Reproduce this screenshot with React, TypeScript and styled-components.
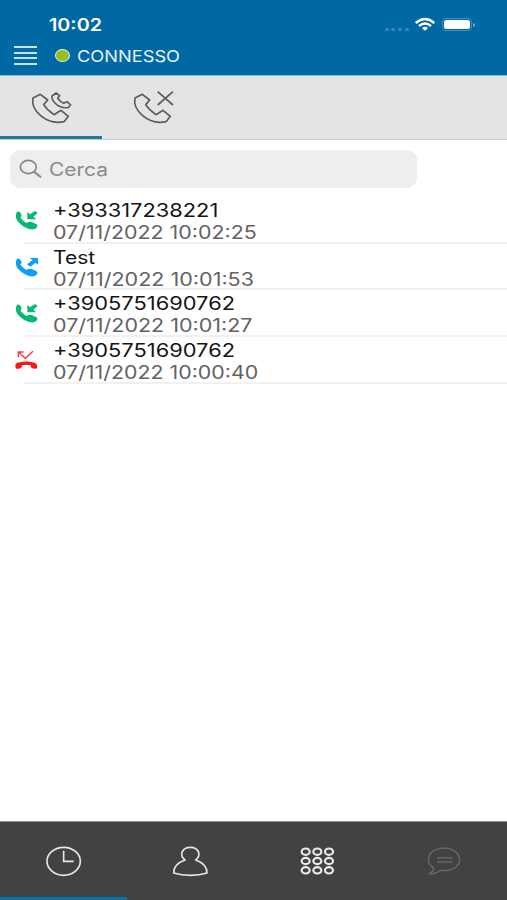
import React from "react";
import styled, { createGlobalStyle } from "styled-components";

const Global = createGlobalStyle`
  * { box-sizing: border-box; }
  body { margin: 0; background: #fff; font-family: Inter, "Liberation Sans", sans-serif; }
  svg { display: block; flex: none; overflow: visible; }
`;

const Screen = styled.div`
  width: 507px;
  height: 900px;
  display: flex;
  flex-direction: column;
  background: #fff;
  overflow: hidden;
`;

const Header = styled.header`
  flex: none;
  height: 76px;
  background: #0068a3;
  border-bottom: 1px solid #80bade;
  color: #fff;
`;

const StatusBar = styled.div`
  height: 40px;
  padding: 10px 32px 0 49px;
  display: flex;
  justify-content: space-between;
`;

const Connection = styled.div`
  height: 31px;
  padding-left: 14px;
  display: flex;
  align-items: center;
`;

const Label = styled.span<{ $size: number; $scale: number; $color: string; $weight?: number; $line?: number }>`
  display: block;
  width: max-content;
  white-space: nowrap;
  font-size: ${(p) => p.$size}px;
  font-weight: ${(p) => p.$weight ?? 400};
  line-height: ${(p) => p.$line ?? 22}px;
  color: ${(p) => p.$color};
  transform: scaleX(${(p) => p.$scale});
  transform-origin: left center;
`;

const Burger = styled.div`
  width: 23px;
  height: 19px;
  display: flex;
  flex-direction: column;
  justify-content: space-between;
  margin-right: 17.5px;
  span { height: 2px; background: #c9e2f1; }
`;

const Dot = styled.div`
  width: 15px;
  height: 13px;
  border-radius: 50%;
  background: #93bf1f;
  border: 1.5px solid #e4f2e4;
  margin-right: 7px;
`;

const Tabs = styled.nav`
  flex: none;
  height: 64px;
  display: flex;
  background: #e4e4e4;
  border-bottom: 1px solid #cbcbcb;
`;

const Tab = styled.div<{ $active?: boolean }>`
  width: 102px;
  height: 63px;
  padding: 14px 0 0 1px;
  display: flex;
  justify-content: center;
  border-bottom: 3px solid ${(p) => (p.$active ? "#1f78a8" : "transparent")};
`;

const Search = styled.div`
  flex: none;
  width: 407px;
  height: 38px;
  margin: 10px 0 9px 10px;
  padding-left: 9px;
  display: flex;
  align-items: center;
  gap: 6.5px;
  border-radius: 11px / 9px;
  background: #eee;
`;

const SearchText = styled.div`
  padding-top: 1px;
`;

const List = styled.main`
  flex: 1;
`;

const Row = styled.div`
  height: 46.7px;
  display: flex;
  padding-left: 15px;
`;

const RowIcon = styled.div`
  width: 9px;
  padding-top: 14px;
`;

const RowText = styled.div`
  flex: 1;
  padding: 3px 0 0 29px;
  border-bottom: 2px solid #f1f1f1;
`;

const BottomBar = styled.footer`
  flex: none;
  height: 79px;
  display: grid;
  grid-template-columns: repeat(4, 1fr);
  background: #424242;
  border-top: 1px solid #8d8d8d;
`;

const BottomItem = styled.div<{ $active?: boolean }>`
  display: flex;
  justify-content: center;
  padding: 23px 0 0 1px;
  border-bottom: 3px solid ${(p) => (p.$active ? "#0870aa" : "transparent")};
`;

const handset =
  "M98 66 L120 55 L142 72 L130 86 Q141 103 161 116 L182 103 L204 121 L191 137 Q151 145 121 119 Q92 94 98 66 Z";

const RecentTabIcon = () => (
  <svg width="40" height="34" viewBox="95 42 120 102" fill="none" stroke="#5b5b5b" strokeWidth="5" strokeLinejoin="round">
    <path d={handset} />
    <path d="M155 60 L167 51 L178 59 L172 67 Q179 77 190 82 L200 77 L211 87 L203 95 Q178 97 164 81 Q153 70 155 60 Z" />
  </svg>
);

const MissedTabIcon = () => (
  <svg width="40" height="34" viewBox="95 42 120 102" fill="none" stroke="#5b5b5b" strokeWidth="5" strokeLinejoin="round">
    <path d={handset} />
    <path d="M166 47 L212 87 M212 47 L166 87" />
  </svg>
);

const filledHandset =
  "M6 3 Q13 -1 18 8 Q22 15 16 19 Q21 29 34 36 Q42 31 50 33 L65 40 Q70 44 65 50 Q57 58 42 54 Q19 47 6 28 Q-1 13 6 3 Z";

type Kind = "incoming" | "outgoing" | "missed";

const CallIcon = ({ kind }: { kind: Kind }) => {
  if (kind === "missed")
    return (
      <svg width="23" height="19" viewBox="0 0 69 57" fill="none">
        <path d="M10 19 V3 H26 M10 3 L31 22 L54 1" stroke="#f23c3c" strokeWidth="4" />
        <path d="M2 51 Q-3 35 15 34 Q34 29 52 34 Q69 36 66 51 Q65 53 61 53 L51 52 Q47 51 47 43 Q34 40 21 43 Q21 51 17 52 L6 54 Z" fill="#fa1515" />
      </svg>
    );
  return (
    <svg width="23" height="19" viewBox="0 0 69 57" fill={kind === "incoming" ? "#08b872" : "#0aa0f5"}>
      <path d={filledHandset} />
      {kind === "incoming" ? (
        <path d="M37 3 L45 10 L60 0 L68 6 L55 17 L64 25 H37 Z" />
      ) : (
        <path d="M44 0 H69 V20 L62 14 L46 26 L36 19 L53 7 Z" />
      )}
    </svg>
  );
};

const WifiIcon = () => (
  <svg width="20" height="13" viewBox="0 0 60 39" fill="none" stroke="#fff" strokeWidth="7">
    <path d="M2 15 Q30 -9 58 15 M12 24 Q30 9 48 24" />
    <path d="M21 30 Q30 23 39 30 L30 38 Z" fill="#fff" stroke="none" />
  </svg>
);

const StatusIcons = styled.div`
  display: flex;
  align-items: center;
  height: 29px;
`;

const Signal = styled.div`
  display: flex;
  gap: 2.6px;
  padding-top: 9px;
  margin-right: 6.5px;
  span { width: 4px; height: 3px; border-radius: 50%; background: #3e8bbb; }
`;

const Battery = styled.div`
  width: 30px;
  height: 13px;
  margin: 0 2px 0 7px;
  padding: 1px;
  border: 1px solid #3f8fc1;
  border-radius: 4px;
  &::before { content: ""; display: block; height: 100%; border-radius: 2.5px; background: #fff; }
`;

const BatteryCap = styled.div`
  width: 2px;
  height: 4px;
  margin-left: -1px;
  border-radius: 0 2px 2px 0;
  background: #5ba1cb;
`;

const calls: { kind: Kind; name: string; nameScale: number; date: string; dateScale: number }[] = [
  { kind: "incoming", name: "+393317238221", nameScale: 1.213, date: "07/11/2022 10:02:25", dateScale: 1.188 },
  { kind: "outgoing", name: "Test", nameScale: 1.17, date: "07/11/2022 10:01:53", dateScale: 1.197 },
  { kind: "incoming", name: "+3905751690762", nameScale: 1.214, date: "07/11/2022 10:01:27", dateScale: 1.194 },
  { kind: "missed", name: "+3905751690762", nameScale: 1.214, date: "07/11/2022 10:00:40", dateScale: 1.187 },
];

export default function App() {
  return (
    <>
      <Global />
      <Screen>
        <Header>
          <StatusBar>
            <Label $size={17} $scale={1.16} $weight={600} $line={30} $color="#fff">10:02</Label>
            <StatusIcons>
              <Signal><span /><span /><span /><span /></Signal>
              <WifiIcon />
              <Battery />
              <BatteryCap />
            </StatusIcons>
          </StatusBar>
          <Connection>
            <Burger><span /><span /><span /><span /></Burger>
            <Dot />
            <Label $size={16} $scale={1.14} $color="#e6f3fb">CONNESSO</Label>
          </Connection>
        </Header>
        <Tabs>
          <Tab $active><RecentTabIcon /></Tab>
          <Tab><MissedTabIcon /></Tab>
        </Tabs>
        <Search>
          <svg width="23" height="20" viewBox="0 0 69 60" fill="none" stroke="#858585" strokeWidth="5">
            <ellipse cx="28" cy="24" rx="24" ry="20" />
            <path d="M45 38 L66 55" strokeWidth="6" />
          </svg>
          <SearchText>
            <Label $size={18} $scale={1.165} $color="#8b8b8b">Cerca</Label>
          </SearchText>
        </Search>
        <List>
          {calls.map((c) => (
            <Row key={c.date}>
              <RowIcon><CallIcon kind={c.kind} /></RowIcon>
              <RowText>
                <Label $size={18} $scale={c.nameScale} $color="#151515">{c.name}</Label>
                <Label $size={18} $scale={c.dateScale} $color="#636363">{c.date}</Label>
              </RowText>
            </Row>
          ))}
        </List>
        <BottomBar>
          <BottomItem $active>
            <svg width="37" height="32" viewBox="0 0 111 96" fill="none" stroke="#e6e6e6" strokeWidth="5">
              <ellipse cx="56" cy="49" rx="50" ry="42" />
              <path d="M56 17 V49 H86" />
            </svg>
          </BottomItem>
          <BottomItem>
            <svg width="37" height="32" viewBox="0 0 111 96" fill="none" stroke="#e6e6e6" strokeWidth="5" strokeLinejoin="round">
              <path d="M39 45 Q26 35 30 22 Q36 7 55 7 Q74 7 80 22 Q84 35 71 45 Q105 57 105 84 Q82 91 55 91 Q28 91 5 84 Q5 57 39 45 Z" />
            </svg>
          </BottomItem>
          <BottomItem>
            <svg width="37" height="32" viewBox="0 0 111 96" fill="none" stroke="#eaeaea" strokeWidth="6.5">
              {[20, 48, 76].map((y) => [20, 55, 90].map((x) => <ellipse key={`${x}-${y}`} cx={x} cy={y} rx="12" ry="9.5" />))}
            </svg>
          </BottomItem>
          <BottomItem>
            <svg width="37" height="32" viewBox="0 0 111 96" fill="none" stroke="#656565" strokeWidth="4.6" strokeLinejoin="round">
              <path d="M23 69 Q7 59 7 43 Q8 25 24 16 Q52 2 80 15 Q101 26 101 44 Q100 62 82 71 Q66 80 43 76 Q29 88 9 86 Q23 80 23 69 Z" />
              <path d="M33 38 H80 M33 51 H80" />
            </svg>
          </BottomItem>
        </BottomBar>
      </Screen>
    </>
  );
}
